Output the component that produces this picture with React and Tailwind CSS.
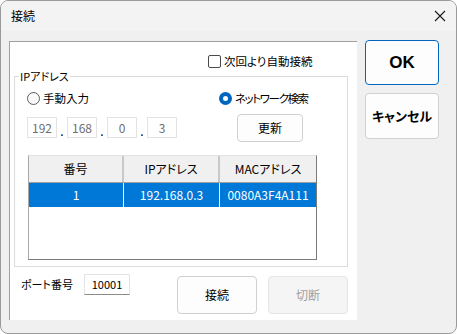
import React from 'react';

function Radio({ checked, label, tight }) {
  return (
    <label className="flex items-center gap-[3px] text-[11.5px] leading-[13px] text-black">
      {checked ? (
        <span className="w-[13px] h-[13px] rounded-full bg-[#0067c0] flex items-center justify-center">
          <span className="w-[5px] h-[5px] rounded-full bg-white" />
        </span>
      ) : (
        <span className="w-[13px] h-[13px] rounded-full border border-[#5f5f5f] bg-[#fafafa]" />
      )}
      <span className={tight ? 'tracking-[-1.4px]' : ''}>{label}</span>
    </label>
  );
}

function IpBox({ value }) {
  return (
    <div className="w-[30px] h-[21px] border border-[#e3e3e3] bg-white flex items-center justify-center text-[12px] text-[#6e6e6e]">
      {value}
    </div>
  );
}

function Dot() {
  return <div className="w-[10px] h-[21px] flex items-end justify-center pb-[2px] text-[12px] leading-[10px] text-black">.</div>;
}

export default function App() {
  const octets = ['192', '168', '0', '3'];

  return (
    <div className="w-[457px] h-[334px] bg-[#f0f0f0] border border-[#9a9a9a] rounded-[8px] overflow-hidden flex flex-col font-['Noto_Sans_CJK_JP','Noto_Sans',sans-serif] [font-feature-settings:'palt'] text-black select-none">
      {/* title bar */}
      <div className="h-[30px] bg-[#f3f3f3] flex items-center justify-between pl-[10px] pr-[9px]">
        <span className="text-[12px]">接続</span>
        <svg width="12" height="12" viewBox="0 0 12 12" className="mr-[1px]">
          <path d="M1 1L11 11M11 1L1 11" stroke="#1a1a1a" strokeWidth="1.1" fill="none" />
        </svg>
      </div>

      {/* body */}
      <div className="flex-1 flex items-start pl-[8px]">
        {/* main panel */}
        <div className="mt-[10px] w-[348px] h-[279px] bg-white border-t border-l border-[#a0a0a0] flex flex-col">
          {/* auto connect */}
          <div className="mt-[13px] pl-[198px] flex items-center gap-[3px] text-[11.5px] leading-[13px]">
            <span className="w-[13px] h-[13px] rounded-[2px] border border-[#4a4a4a] bg-white" />
            <span>次回より自動接続</span>
          </div>

          {/* IP group box */}
          <div className="relative mt-[8px] ml-[4px] w-[334px] h-[191px] border border-[#dcdcdc]">
            <span className="absolute -top-[8px] left-[4px] bg-white px-[1px] text-[11px] leading-[14px]">IPアドレス</span>

            <div className="mt-[15px] pl-[12px] flex">
              <div className="w-[192px]">
                <Radio label="手動入力" />
              </div>
              <Radio checked tight label="ネットワーク検索" />
            </div>

            <div className="mt-[9px] pl-[12px] flex items-center h-[27px]">
              <div className="w-[210px] flex items-center">
                {octets.map((o, i) => (
                  <React.Fragment key={i}>
                    {i > 0 && <Dot />}
                    <IpBox value={o} />
                  </React.Fragment>
                ))}
              </div>
              <button className="w-[66px] h-[28px] rounded-[4px] border border-[#d0d0d0] bg-[#fdfdfd] text-[12px]">
                更新
              </button>
            </div>

            {/* device table */}
            <div className="mt-[14px] ml-[13px] w-[289px] h-[105px] bg-white border-l border-t border-l-[#a8a8a8] border-t-[#e3e3e3] border-r border-b border-r-[#7a7a7a] border-b-[#7a7a7a] flex flex-col text-[12px]">
              <div className="grid grid-cols-[95px_96px_96px] h-[27px] bg-[#f0f0f0] border-b border-[#a0a0a0]">
                <div className="flex items-center justify-center border-r-2 border-[#c8c8c8]">番号</div>
                <div className="flex items-center justify-center border-r-2 border-[#c8c8c8]">IPアドレス</div>
                <div className="flex items-center justify-center">MACアドレス</div>
              </div>
              <div className="grid grid-cols-[95px_96px_96px] h-[24px] bg-[#0078d7] text-white">
                <div className="flex items-center justify-center border-r border-white">1</div>
                <div className="flex items-center justify-center border-r border-white">192.168.0.3</div>
                <div className="flex items-center justify-center">0080A3F4A111</div>
              </div>
            </div>
          </div>

          {/* port + connect buttons */}
          <div className="mt-[7px] pl-[11px] flex items-start">
            <div className="flex items-center h-[21px]">
              <span className="w-[63px] text-[11px]">ポート番号</span>
              <div className="w-[46px] h-[21px] border border-[#e3e3e3] border-b-[#8a8a8a] bg-white flex items-center justify-center text-[11px]">
                10001
              </div>
            </div>
            <button className="ml-[47px] mt-[2px] w-[80px] h-[38px] rounded-[4px] border border-[#d0d0d0] bg-[#fdfdfd] text-[12px]">
              接続
            </button>
            <button className="ml-[11px] mt-[2px] w-[80px] h-[38px] rounded-[4px] border border-[#e5e5e5] bg-[#f5f5f5] text-[12px] text-[#a0a0a0]">
              切断
            </button>
          </div>
        </div>

        {/* right buttons */}
        <div className="ml-[8px] mt-[9px] flex flex-col gap-[8px]">
          <button className="w-[74px] h-[45px] rounded-[4px] border border-[#0067c0] bg-[#fdfdfd] font-['Liberation_Sans',sans-serif] font-bold text-[17px]">
            OK
          </button>
          <button className="w-[74px] h-[46px] rounded-[4px] border border-[#d0d0d0] bg-[#fdfdfd] font-bold text-[13px]">
            キャンセル
          </button>
        </div>
      </div>
    </div>
  );
}
